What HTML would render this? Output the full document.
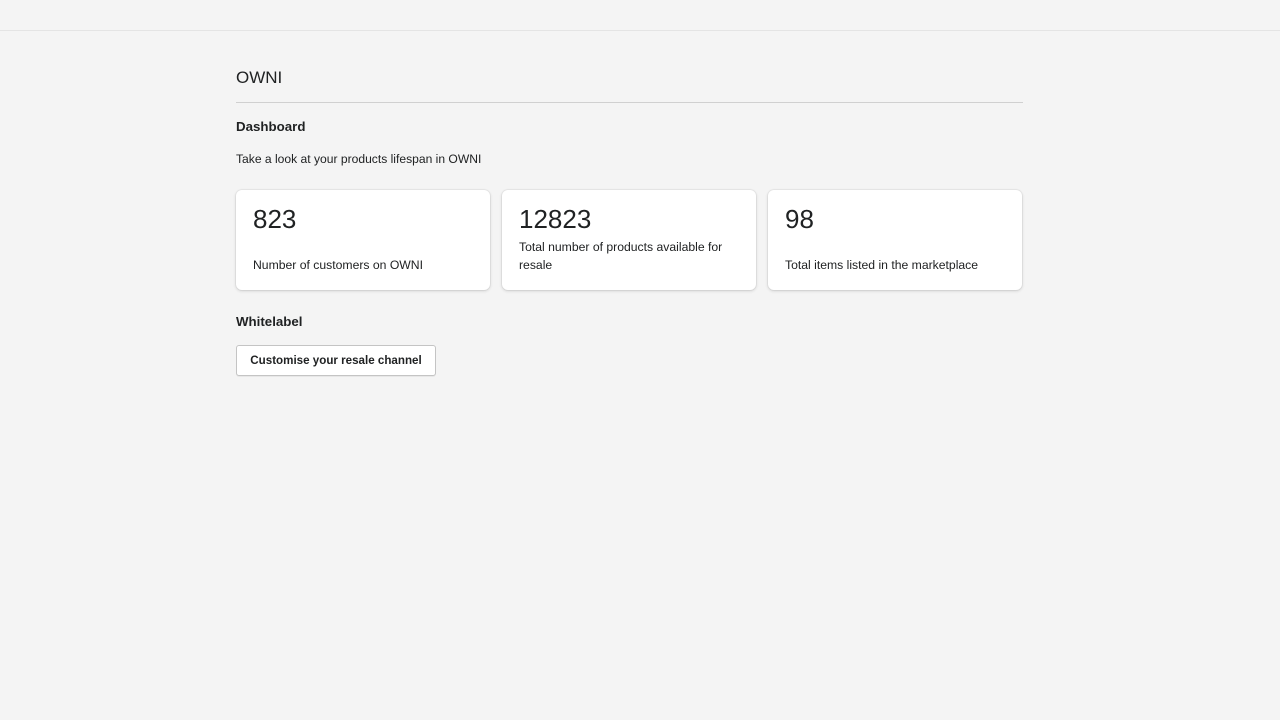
<!DOCTYPE html>
<html><head><style>
body{margin:0;background:#f4f4f4;font-family:"Liberation Sans",sans-serif;color:#202223;width:1280px;height:720px;overflow:hidden;position:relative}
.top{position:absolute;left:0;top:0;width:1280px;height:30px;border-bottom:1px solid #e4e4e4;background:#f4f4f4}
.a{position:absolute}
.card{position:absolute;top:190px;width:254px;height:100px;background:#fff;border-radius:6px;box-shadow:0 0 0 1px rgba(0,0,0,.04),0 1px 3px rgba(0,0,0,.15)}
.card .n{position:absolute;left:17px;top:14px;font-size:26px}
.card .t{position:absolute;left:17px;font-size:12.2px;line-height:18px;width:220px}
</style></head><body>
<div class="top"></div>
<div class="a" style="left:236px;top:68px;font-size:17px">OWNI</div>
<div class="a" style="left:236px;top:102px;width:787px;height:1px;background:#d0d0d0"></div>
<div class="a" style="left:236px;top:119px;font-size:13.3px;font-weight:bold">Dashboard</div>
<div class="a" style="left:236px;top:152px;font-size:12.1px">Take a look at your products lifespan in OWNI</div>
<div class="card" style="left:236px"><div class="n">823</div><div class="t" style="top:66px">Number of customers on OWNI</div></div>
<div class="card" style="left:502px"><div class="n">12823</div><div class="t" style="top:48px">Total number of products available for resale</div></div>
<div class="card" style="left:768px"><div class="n">98</div><div class="t" style="top:66px">Total items listed in the marketplace</div></div>
<div class="a" style="left:236px;top:314px;font-size:13.3px;font-weight:bold">Whitelabel</div>
<div class="a" style="left:236px;top:345px;width:198px;height:29px;background:#fff;border:1px solid #c4c4c4;border-radius:3px;box-shadow:0 1px 0 rgba(0,0,0,.05);font-size:11.6px;font-weight:bold;line-height:29px;text-align:center">Customise your resale channel</div>
</body></html>
